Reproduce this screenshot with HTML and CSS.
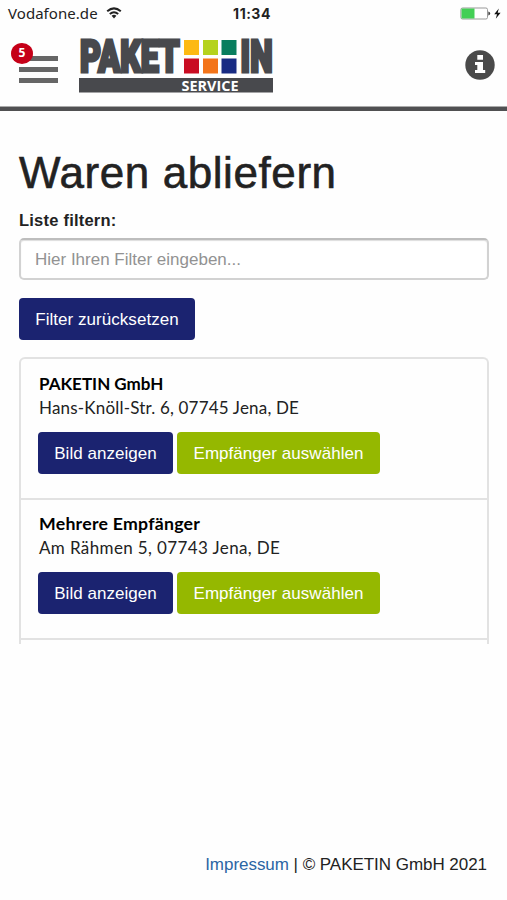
FILE: index.html
```html
<!DOCTYPE html>
<html lang="de">
<head>
<meta charset="utf-8">
<meta name="viewport" content="width=device-width, initial-scale=1">
<title>Waren abliefern</title>
<link rel="stylesheet" href="styles.css">
</head>
<body>
<div class="status">
  <div class="carrier"><span class="carrier-name">Vodafone.de</span>
    <svg class="wifi" width="16" height="12" viewBox="0 0 16 12" fill="none" stroke="#222" stroke-width="2"><path d="M1.2 4.3Q8-1.5 14.8 4.3M3.8 7Q8 3.4 12.2 7"/><path d="M5.6 8.8Q8 6.8 10.4 8.8L8 11.5Z" fill="#222" stroke="none"/></svg>
  </div>
  <time class="clock">11:34</time>
  <svg class="battery" width="42" height="14" viewBox="0 0 42 14"><rect x=".9" y="1" width="26.6" height="11" rx="1.6" fill="#fff" stroke="#999"/><path d="M1.5 1.5H14.5V11.5H1.5Z" fill="#43cf55"/><path d="M28.3 4.5Q30.2 4.8 30.2 6.5T28.3 8.5Z" fill="#444"/><path d="M38.8 1.5L34.2 7.2H37L35.8 11.7L40.6 5.8H37.7Z" fill="#111"/></svg>
</div>
<header class="header">
  <button class="menu" aria-label="Menü"><span class="line"></span><span class="line"></span><span class="line"></span><span class="badge">5</span></button>
  <svg class="logo" width="194" height="54" viewBox="0 0 194 54">
    <g class="word"><text x="1" y="33" textLength="99.500" lengthAdjust="spacingAndGlyphs">PAKET</text><text x="161.500" y="33" textLength="32" lengthAdjust="spacingAndGlyphs">IN</text></g>
    <path fill="#fdb913" d="M105 1h15v15h-15z"/><path fill="#b5d21d" d="M124 1h15v15h-15z"/><path fill="#087d5e" d="M142.500 1h15v15h-15z"/>
    <path fill="#c90c22" d="M105 19.500h15v15h-15z"/><path fill="#f37419" d="M124 19.500h15v15h-15z"/><path fill="#182b83" d="M142.500 19.500h15v15h-15z"/>
    <path fill="#48494d" d="M0 39h194v14.500H0z"/>
    <text class="service" x="102.500" y="51.700" textLength="57" lengthAdjust="spacingAndGlyphs">SERVICE</text>
  </svg>
  <svg class="info" width="30" height="30" viewBox="0 0 30 30"><circle cx="15" cy="15" r="14.700" fill="#4a4a4a"/><path fill="#fff" d="M12.300 5H18v4.700h-5.700zM10 12h8v8h2.200v3H10v-3h2.300v-5H10z"/></svg>
</header>
<main class="main">
  <h1 class="title"><span>Waren abliefern</span></h1>
  <label class="label" for="filter">Liste filtern:</label>
  <input class="filter" id="filter" type="text" placeholder="Hier Ihren Filter eingeben...">
  <button class="btn reset">Filter zurücksetzen</button>
  <div class="list">
    <section class="item">
      <div class="name name-company">PAKETIN GmbH</div>
      <div class="address">Hans-Knöll-Str. 6, 07745 Jena, DE</div>
      <div class="actions"><button class="btn show">Bild anzeigen</button><button class="btn choose">Empfänger auswählen</button></div>
    </section>
    <section class="item">
      <div class="name">Mehrere Empfänger</div>
      <div class="address address-short">Am Rähmen 5, 07743 Jena, DE</div>
      <div class="actions"><button class="btn show">Bild anzeigen</button><button class="btn choose">Empfänger auswählen</button></div>
    </section>
  </div>
</main>
<footer class="footer"><a class="link" href="#">Impressum</a> | © PAKETIN GmbH 2021</footer>
</body>
</html>
```
FILE: styles.css
```css
* { box-sizing: border-box; }
body { margin: 0; height: 900px; display: flex; flex-direction: column; background: #fefefe; color: #222; font-family: "Liberation Sans", Arial, sans-serif; font-size: 17px; overflow: hidden; }
button { font-family: inherit; cursor: pointer; }

.status { height: 27px; flex: none; display: grid; grid-template-columns: 1fr auto 1fr; padding: 0 5px 0 8px; align-items: center; }
.carrier { display: flex; align-items: center; gap: 8px; font: 15px/27px "Noto Sans", sans-serif; }
.carrier-name { width: 91px; white-space: nowrap; letter-spacing: .05px; }
.carrier .wifi { margin: -2px 0 0 -1px; }
.clock { margin-right: 6px; font: bold 14px/27px Inter, sans-serif; letter-spacing: .5px; }
.battery { justify-self: end; }

.header { height: 84px; flex: none; display: flex; padding: 12px 12px 0 11px; border-bottom: 4px solid #505052; box-shadow: inset 0 -1px #aaa; }
.menu { position: relative; width: 48px; height: 58px; padding: 17px 0 0 8px; border: 0; background: none; display: flex; flex-direction: column; gap: 6px; }
.line { width: 39px; height: 5px; background: #666; }
.badge { position: absolute; left: 0; top: 4px; width: 22px; height: 21px; border-radius: 50%; background: #c50018; color: #fff; font: bold 12px/20px "Open Sans", sans-serif; text-align: center; }
.logo { margin-left: 20px; overflow: visible; }
.word { font: 900 43.500px Roboto, sans-serif; fill: #48494d; stroke: #48494d; stroke-width: 3.2px; }
.service { font: bold 14.500px "Open Sans", sans-serif; fill: #fff; }
.info { margin: 11px 0 0 auto; }

.main { flex: 1; padding: 37px 18px 0 19px; display: flex; flex-direction: column; align-items: flex-start; }
.title { margin: 0; font-weight: 400; font-size: 44px; line-height: 50px; letter-spacing: .58px; -webkit-text-stroke: .6px #222; white-space: nowrap; }
.label { margin-top: 11px; font-weight: bold; font-size: 16.500px; line-height: 22px; letter-spacing: .22px; }
.filter { margin-top: 7px; width: 100%; height: 42px; padding: 1px 14px 0; border: 2px solid #d2d2d2; border-top-color: #bdbdbd; border-radius: 5px; background: #fff; box-shadow: inset 0 1px 1px #ddd; font: 17px "Liberation Sans", Arial, sans-serif; }
.filter::placeholder { color: #929292; opacity: 1; }
.btn { height: 42px; padding: 1px 0 0; border: 0; border-radius: 4px; color: #fff; background: #1b2370; font-size: 17px; letter-spacing: .04px; white-space: nowrap; }
.reset { margin-top: 18px; width: 176px; }
.list { width: 100%; height: 287px; margin-top: 17px; overflow: hidden; border: 2px solid #e2e2e2; border-bottom: 0; border-radius: 6px 6px 0 0; }
.item { height: 141px; padding: 13px 17px 0 18px; border-bottom: 2px solid #e2e2e2; }
.item + .item { height: 140px; padding-top: 12px; }
.name, .address { font-family: Lato, sans-serif; font-size: 17px; line-height: 23.500px; white-space: nowrap; }
.name { font-weight: bold; font-size: 17.700px; color: #000; letter-spacing: .25px; }
.name-company { font-size: 17px; letter-spacing: 0; }
.address { letter-spacing: .19px; }
.address-short { letter-spacing: .38px; }
.actions { display: flex; gap: 4px; margin: 13px 0 0 -1px; }
.show { width: 135px; }
.choose { width: 203px; background: #95b800; }
.footer { padding: 0 20px 24px 0; text-align: right; line-height: 22px; font-size: 17px; letter-spacing: -.04px; }
.link { color: #2b65a4; text-decoration: none; }
```
